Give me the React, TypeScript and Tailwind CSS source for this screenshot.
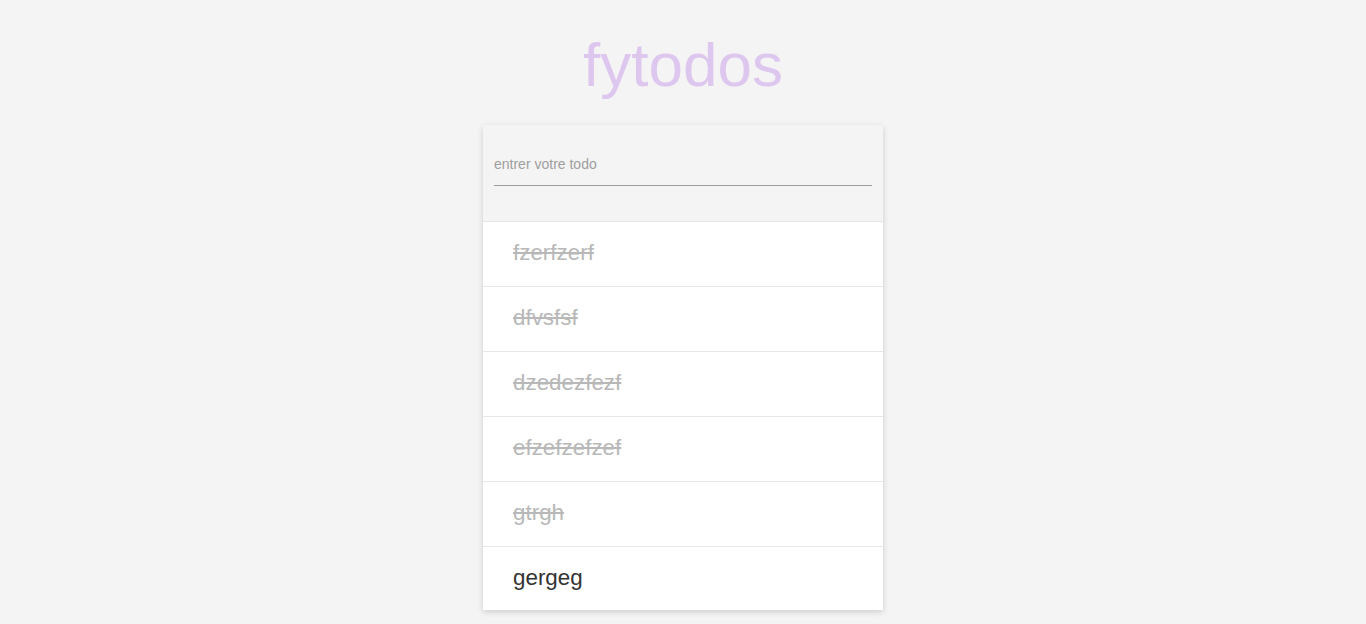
import React from "react";

const todos = [
  { text: "fzerfzerf", done: true },
  { text: "dfvsfsf", done: true },
  { text: "dzedezfezf", done: true },
  { text: "efzefzefzef", done: true },
  { text: "gtrgh", done: true },
  { text: "gergeg", done: false },
];

export default function App() {
  return (
    <div
      className="min-h-[624px] w-full bg-[#f4f4f4] flex flex-col items-center"
      style={{ fontFamily: '"Liberation Sans", Arial, sans-serif' }}
    >
      <h1 className="mt-[28px] h-[74px] leading-[74px] text-[62px] font-normal text-[#dec7ee]">
        fytodos
      </h1>
      <div className="mt-[23px] w-[400px] bg-white shadow-[0_2px_6px_rgba(0,0,0,0.16)]">
        <div className="h-[96px] bg-[#f4f4f4] px-[11px] pt-[29px]">
          <input
            type="text"
            placeholder="entrer votre todo"
            className="block w-full h-[32px] pb-[11px] bg-transparent border-b border-[#9e9e9e] text-[14px] leading-[20px] text-[#333] placeholder:text-[#9e9e9e] outline-none"
            style={{ fontFamily: '"Liberation Sans", Arial, sans-serif' }}
          />
        </div>
        {todos.map((t, i) => (
          <div
            key={t.text}
            className={
              i === todos.length - 1
                ? "h-[64px] border-t border-[#e6e6e6] flex items-center pl-[30px] pb-[2px]"
                : "h-[65px] border-t border-[#e6e6e6] flex items-center pl-[30px] pb-[2px]"
            }
          >
            <span
              className={
                t.done
                  ? "text-[22.4px] text-[#b8b8b8] line-through"
                  : "text-[22.4px] text-[#333333]"
              }
            >
              {t.text}
            </span>
          </div>
        ))}
      </div>
    </div>
  );
}
